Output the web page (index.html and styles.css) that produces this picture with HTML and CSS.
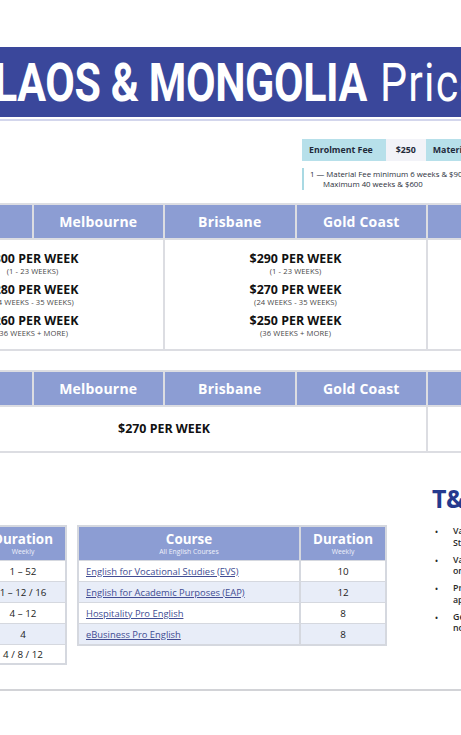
FILE: index.html
```html
<!DOCTYPE html>
<html lang="en">
<head>
<meta charset="utf-8">
<title>Laos &amp; Mongolia Price List</title>
<link rel="stylesheet" href="styles.css">
</head>
<body>
<div class="page">
  <header class="banner">
    <h1 class="title"><span class="title-bold">LAOS &amp; MONGOLIA</span><span class="title-light">Price List 2025</span></h1>
  </header>

  <section class="fees">
    <div class="fee-row">
      <div class="fee-label">Enrolment Fee</div>
      <div class="fee-value">$250</div>
      <div class="fee-label">Material Fee</div>
      <div class="fee-value">$15 per week</div>
    </div>
    <div class="fee-note">
      <span class="note-line">1 — Material Fee minimum 6 weeks &amp; $90</span>
      <span class="note-line note-indent">Maximum 40 weeks &amp; $600</span>
    </div>
  </section>

  <section class="ptable">
    <div class="th">Sydney</div>
    <div class="th">Melbourne</div>
    <div class="th">Brisbane</div>
    <div class="th">Gold Coast</div>
    <div class="th">Perth</div>
    <div class="td span2">
      <div class="price"><b>$300 PER WEEK</b><small>(1 - 23 WEEKS)</small></div>
      <div class="price"><b>$280 PER WEEK</b><small>(24 WEEKS - 35 WEEKS)</small></div>
      <div class="price"><b>$260 PER WEEK</b><small>(36 WEEKS + MORE)</small></div>
    </div>
    <div class="td span2">
      <div class="price"><b>$290 PER WEEK</b><small>(1 - 23 WEEKS)</small></div>
      <div class="price"><b>$270 PER WEEK</b><small>(24 WEEKS - 35 WEEKS)</small></div>
      <div class="price"><b>$250 PER WEEK</b><small>(36 WEEKS + MORE)</small></div>
    </div>
    <div class="td"></div>
  </section>

  <section class="ptable ptable-two">
    <div class="th">Sydney</div>
    <div class="th">Melbourne</div>
    <div class="th">Brisbane</div>
    <div class="th">Gold Coast</div>
    <div class="th">Perth</div>
    <div class="td span4 single">
      <div class="price"><b>$270 PER WEEK</b></div>
    </div>
    <div class="td single"></div>
  </section>

  <section class="bottom">
    <div class="ctable dtable">
      <div class="ch"><b>Duration</b><small>Weekly</small></div>
      <div class="cd">1 – 52</div>
      <div class="cd alt">1 – 12 / 16</div>
      <div class="cd">4 – 12</div>
      <div class="cd alt">4</div>
      <div class="cd">4 / 8 / 12</div>
    </div>

    <div class="ctable course">
      <div class="ch"><b>Course</b><small>All English Courses</small></div>
      <div class="ch"><b>Duration</b><small>Weekly</small></div>
      <div class="cd left"><a href="#">English for Vocational Studies (EVS)</a></div>
      <div class="cd">10</div>
      <div class="cd left alt"><a href="#">English for Academic Purposes (EAP)</a></div>
      <div class="cd alt">12</div>
      <div class="cd left"><a href="#">Hospitality Pro English</a></div>
      <div class="cd">8</div>
      <div class="cd left alt"><a href="#">eBusiness Pro English</a></div>
      <div class="cd alt">8</div>
    </div>

    <div class="terms">
      <h2 class="terms-title">T&amp;C</h2>
      <ul class="terms-list">
        <li>Valid for new enrolments received<br>Students from Laos &amp; Mongolia only.</li>
        <li>Valid for courses commencing<br>on or before 31 December 2025.</li>
        <li>Prices are per week and<br>apply to full-time study.</li>
        <li>General English prices do<br>not include material fees.</li>
      </ul>
    </div>
  </section>

  <hr class="rule">
</div>
</body>
</html>
```

FILE: styles.css
```css
* { box-sizing: border-box; }

html, body {
  margin: 0;
  padding: 0;
  background: #ffffff;
}

body {
  font-family: "Open Sans", "Noto Sans", sans-serif;
  color: #1c1c1c;
}

.page {
  width: 461px;
  height: 735px;
  overflow: hidden;
}

/* Banner */
.banner {
  margin-top: 47px;
  height: 70px;
  background: #3a479b;
  display: flex;
  align-items: center;
  overflow: hidden;
  box-shadow: 0 2px 0 #ffffff, 0 4px 0 #d3d6ec;
}

.title {
  margin: 2px 0 0 -6px;
  font-family: Roboto, "Liberation Sans", sans-serif;
  font-size: 53px;
  line-height: 1;
  color: #ffffff;
  white-space: nowrap;
  transform: scaleX(0.81);
  transform-origin: left center;
  display: flex;
  align-items: baseline;
  flex-shrink: 0;
}

.title-bold {
  font-weight: 700;
  letter-spacing: -0.5px;
}

.title-light {
  font-weight: 400;
  margin-left: 16px;
  letter-spacing: 1.5px;
}

/* Fees */
.fees {
  margin: 22px 0 0 302px;
  white-space: nowrap;
}

.fee-row {
  display: flex;
  height: 22px;
  background: #b7e0ea;
  width: 400px;
}

.fee-label,
.fee-value {
  display: flex;
  align-items: center;
  font-size: 8.8px;
  font-weight: 700;
  color: #1f2a3a;
}

.fee-label {
  padding: 0 13px 0 7px;
}

.fee-value {
  background: #f2f3f8;
  width: 40px;
  justify-content: center;
}

.fee-note {
  margin-top: 7px;
  border-left: 2px solid #a9d9e3;
  padding: 1px 0 1px 6px;
  font-size: 7.8px;
  line-height: 10px;
  color: #2a2f3a;
}

.note-line { display: block; }
.note-indent { padding-left: 13px; }

/* Price tables */
.ptable {
  display: grid;
  grid-template-columns: repeat(5, 129.5px);
  column-gap: 2px;
  row-gap: 2px;
  background: #dcdde2;
  padding: 2px 0;
  margin: 13px 0 0 -98px;
  width: max-content;
}

.ptable-two {
  margin-top: 19px;
}

.th {
  background: #8c9dd3;
  height: 33px;
  display: flex;
  align-items: center;
  justify-content: center;
  color: #ffffff;
  font-weight: 700;
  font-size: 14px;
  letter-spacing: 0.2px;
}

.td {
  background: #ffffff;
  height: 109px;
  display: flex;
  flex-direction: column;
  align-items: center;
  justify-content: center;
  gap: 7px;
  padding-top: 1px;
}

.td.single {
  height: 44px;
  padding-top: 0;
}

.span2 { grid-column: span 2; }
.span4 { grid-column: span 4; }

.price {
  display: flex;
  flex-direction: column;
  align-items: center;
}

.price b {
  font-size: 12.4px;
  line-height: 14px;
  font-weight: 700;
  color: #111111;
}

.price small {
  font-size: 7.6px;
  line-height: 10px;
  color: #4a4a4a;
  letter-spacing: 0.1px;
}

/* Bottom section */
.bottom {
  display: flex;
  align-items: flex-start;
}

.ctable {
  margin-top: 72px;
  display: grid;
  background: #d5d8df;
  border: 2px solid #d5d8df;
  gap: 1px;
  flex-shrink: 0;
}

.dtable {
  width: 88px;
  margin-left: -21px;
  grid-template-columns: 1fr;
}

.course {
  width: 310px;
  margin-left: 10px;
  grid-template-columns: 220px 1fr;
  column-gap: 2px;
}

.ch {
  background: #8c9dd3;
  height: 33px;
  display: flex;
  flex-direction: column;
  align-items: center;
  justify-content: center;
  color: #ffffff;
}

.ch b {
  font-size: 13.4px;
  line-height: 15px;
  font-weight: 700;
}

.ch small {
  font-size: 6.8px;
  line-height: 9px;
  color: #eef0fa;
}

.cd {
  background: #ffffff;
  height: 20px;
  display: flex;
  align-items: center;
  justify-content: center;
  font-size: 9.8px;
  color: #222222;
}

.dtable .cd:last-child {
  height: 18px;
}

.cd.alt { background: #e8edf8; }

.cd.left {
  justify-content: flex-start;
  padding-left: 7px;
}

.cd a {
  color: #414c93;
  text-decoration: underline;
  font-size: 9.4px;
  white-space: nowrap;
}

.terms {
  margin-left: 45px;
  margin-top: 31px;
  width: 240px;
  flex-shrink: 0;
}

.terms-title {
  margin: 0;
  font-size: 25px;
  line-height: 28px;
  font-weight: 700;
  color: #253a8e;
  letter-spacing: -0.5px;
}

.terms-list {
  list-style: none;
  margin: 14px 0 0 0;
  padding: 0;
}

.terms-list li {
  position: relative;
  padding-left: 21px;
  font-size: 8.8px;
  line-height: 11.5px;
  font-weight: 600;
  color: #2a2a2a;
  margin-bottom: 5.5px;
  white-space: nowrap;
}

.terms-list li::before {
  content: "•";
  position: absolute;
  left: 3px;
  top: 0;
  font-size: 8px;
}

.rule {
  margin: 24px 0 0 0;
  border: 0;
  height: 2px;
  background: #d2d3d7;
}
```
